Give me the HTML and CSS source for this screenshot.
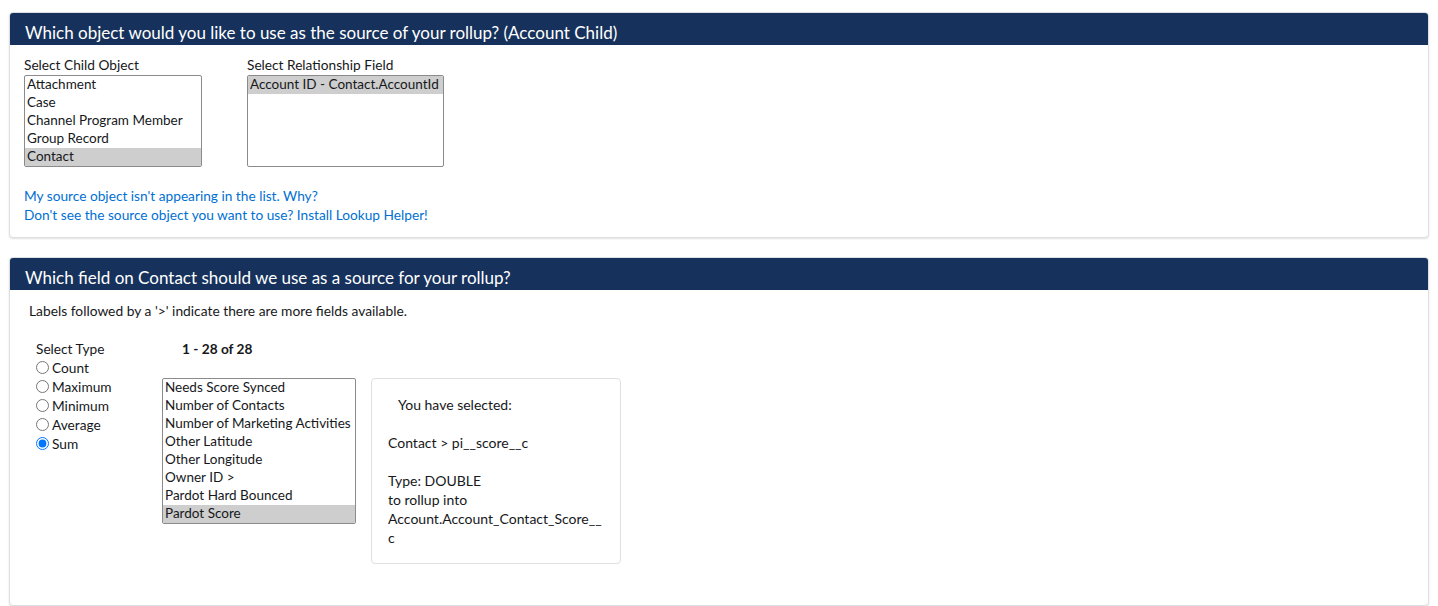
FILE: index.html
```html
<!DOCTYPE html>
<html lang="en">
<head>
<meta charset="utf-8">
<title>Rollup source</title>
<link rel="stylesheet" href="styles.css">
</head>
<body>
<section class="panel panel-object">
  <h2 class="panel-header">Which object would you like to use as the source of your rollup? (Account Child)</h2>
  <div class="panel-body">
    <div class="pickers">
      <div class="picker">
        <div class="field-label">Select Child Object</div>
        <div class="listbox listbox-child" role="listbox">
          <div class="option">Attachment</div>
          <div class="option">Case</div>
          <div class="option">Channel Program Member</div>
          <div class="option">Group Record</div>
          <div class="option selected">Contact</div>
        </div>
      </div>
      <div class="picker">
        <div class="field-label">Select Relationship Field</div>
        <div class="listbox listbox-rel" role="listbox">
          <div class="option selected">Account ID - Contact.AccountId</div>
        </div>
      </div>
    </div>
    <div class="links">
      <a href="#" class="link">My source object isn't appearing in the list. Why?</a>
      <a href="#" class="link">Don't see the source object you want to use? Install Lookup Helper!</a>
    </div>
  </div>
</section>

<section class="panel panel-field">
  <h2 class="panel-header">Which field on Contact should we use as a source for your rollup?</h2>
  <div class="panel-body body-field">
    <p class="hint">Labels followed by a '&gt;' indicate there are more fields available.</p>
    <div class="field-row">
      <div class="type-col">
        <div class="type-title">Select Type</div>
        <label class="radio"><input type="radio" name="t"><span>Count</span></label>
        <label class="radio"><input type="radio" name="t"><span>Maximum</span></label>
        <label class="radio"><input type="radio" name="t"><span>Minimum</span></label>
        <label class="radio"><input type="radio" name="t"><span>Average</span></label>
        <label class="radio"><input type="radio" name="t" checked><span>Sum</span></label>
      </div>
      <div class="fields-col">
        <div class="count">1 - 28 of 28</div>
        <div class="listbox listbox-fields" role="listbox">
          <div class="option">Needs Score Synced</div>
          <div class="option">Number of Contacts</div>
          <div class="option">Number of Marketing Activities</div>
          <div class="option">Other Latitude</div>
          <div class="option">Other Longitude</div>
          <div class="option">Owner ID &gt;</div>
          <div class="option">Pardot Hard Bounced</div>
          <div class="option selected">Pardot Score</div>
        </div>
      </div>
      <div class="summary">
        <div class="summary-title">You have selected:</div>
        <div class="blank"></div>
        <div>Contact &gt; pi__score__c</div>
        <div class="blank"></div>
        <div>Type: DOUBLE</div>
        <div>to rollup into</div>
        <div class="wrap">Account.Account_Contact_Score__c</div>
      </div>
    </div>
  </div>
</section>
</body>
</html>
```
FILE: styles.css
```css
* { box-sizing: border-box; }

body {
  margin: 0;
  padding: 12px 9px 0 9px;
  background: #ffffff;
  font-family: Lato, "Open Sans", Arial, sans-serif;
  font-size: 13.7px;
  color: #16181b;
}

.panel {
  background: #ffffff;
  border: 1px solid #dddfe3;
  border-radius: 4px;
  box-shadow: 0 1px 2px rgba(0, 0, 0, 0.12);
  overflow: hidden;
}

.panel-header {
  margin: 0;
  height: 32px;
  padding: 10px 16px 0 15px;
  background: #16325c;
  color: #ffffff;
  font-weight: normal;
  font-size: 17px;
  line-height: 20px;
}

.panel-body {
  padding: 11px 14px 13px 14px;
}

.pickers {
  display: flex;
  gap: 45px;
}

.field-label {
  line-height: 18px;
  height: 19px;
}

.listbox {
  border: 1px solid #8b8b8b;
  border-radius: 2px;
  background: #ffffff;
  overflow: hidden;
}

.option {
  height: 18px;
  line-height: 16px;
  padding: 0 2px;
  white-space: nowrap;
  font-size: 13.5px;
}

.option.selected {
  background: #cecece;
}

.listbox-child { width: 178px; height: 92px; }
.listbox-rel { width: 197px; height: 92px; }
.listbox-fields { width: 194px; height: 146px; }

.links {
  margin-top: 19px;
  display: flex;
  flex-direction: column;
}

.link {
  color: #0070d2;
  text-decoration: none;
  line-height: 19px;
}

.panel-field {
  margin-top: 19px;
}

.body-field {
  padding: 12px 19px 41px 19px;
}

.hint {
  margin: 0;
  line-height: 18px;
  font-size: 13.8px;
}

.field-row {
  margin-top: 19px;
  margin-left: 7px;
  display: flex;
  align-items: flex-start;
}

.type-col {
  width: 126px;
  display: flex;
  flex-direction: column;
}

.type-title { line-height: 19px; }

.radio {
  display: flex;
  align-items: center;
  height: 19px;
}

.radio input {
  margin: 0 3px 0 0;
  width: 13px;
  height: 13px;
}

.fields-col {
  width: 194px;
  display: flex;
  flex-direction: column;
}

.count {
  font-weight: bold;
  line-height: 19px;
  height: 39px;
  padding-left: 20px;
}

.summary {
  margin-top: 39px;
  margin-left: 15px;
  width: 250px;
  padding: 16px;
  border: 1px solid #dddfe3;
  border-radius: 4px;
  line-height: 19px;
  font-size: 14px;
}

.summary-title { padding-left: 10px; }

.blank { height: 19px; }

.wrap { overflow-wrap: anywhere; }
```
